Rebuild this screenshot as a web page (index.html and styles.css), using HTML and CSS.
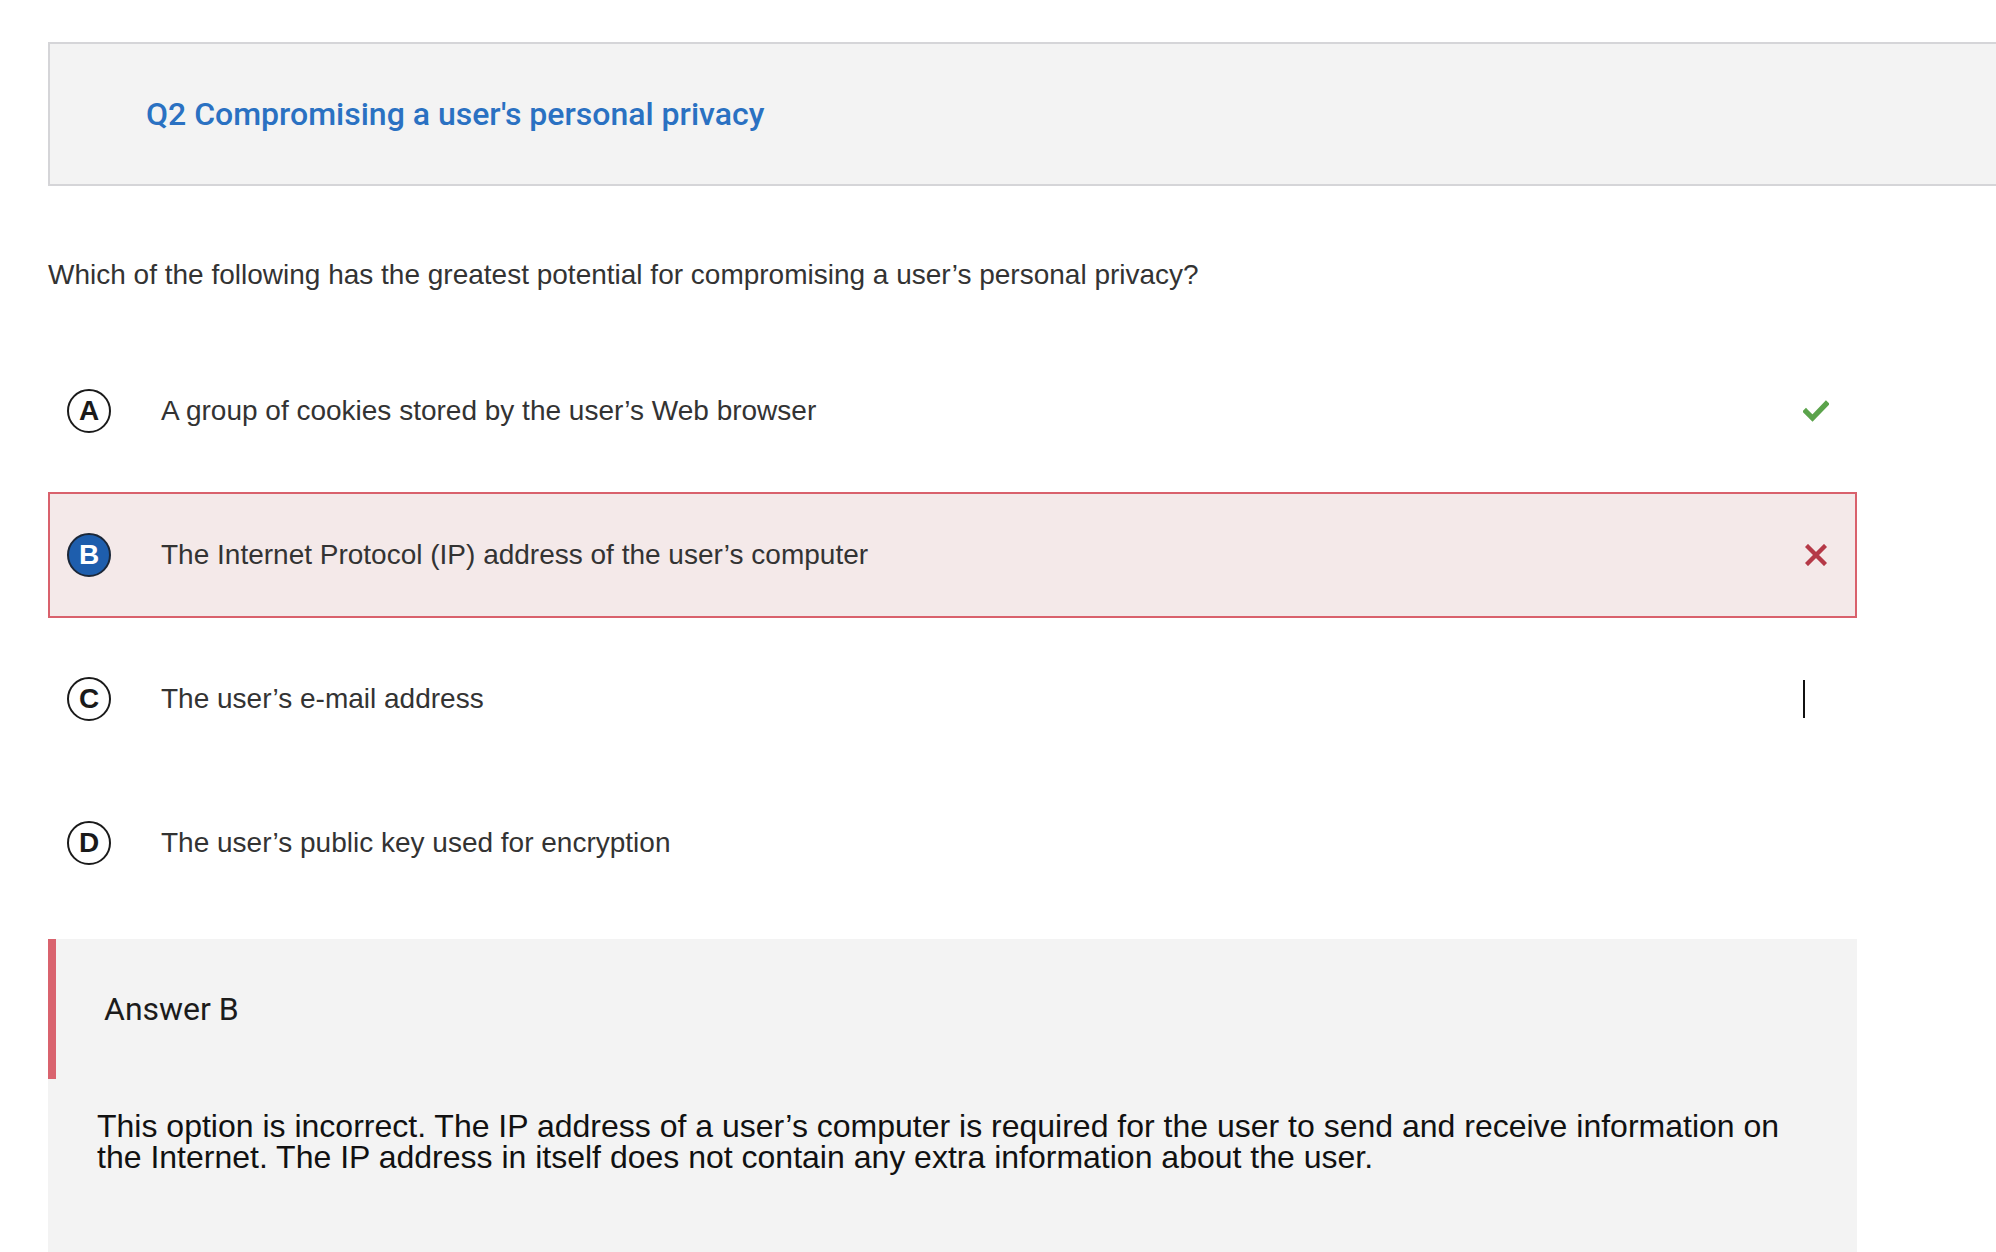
FILE: index.html
```html
<!DOCTYPE html>
<html lang="en">
<head>
<meta charset="utf-8">
<title>Q2 Compromising a user's personal privacy</title>
<link rel="stylesheet" href="styles.css">
</head>
<body>
<main class="page">
  <header class="q-head">
    <h1 class="q-title">Q2 Compromising a user's personal privacy</h1>
  </header>

  <p class="q-text">Which of the following has the greatest potential for compromising a user’s personal privacy?</p>

  <ul class="options">
    <li class="option">
      <span class="badge">A</span>
      <span class="opt-text">A group of cookies stored by the user’s Web browser</span>
      <span class="mark">
        <svg class="icon-check" width="26" height="22" viewBox="0 0 26 22"><path d="M3 11.5 L9.5 18 L23 4" fill="none" stroke="#5ba34b" stroke-width="5.2" stroke-linecap="square"/></svg>
      </span>
    </li>
    <li class="option option-wrong">
      <span class="badge badge-selected">B</span>
      <span class="opt-text">The Internet Protocol (IP) address of the user’s computer</span>
      <span class="mark">
        <svg class="icon-x" width="22" height="22" viewBox="0 0 22 22"><path d="M3 3 L19 19 M19 3 L3 19" fill="none" stroke="#b53947" stroke-width="4.4" stroke-linecap="square"/></svg>
      </span>
    </li>
    <li class="option">
      <span class="badge">C</span>
      <span class="opt-text">The user’s e-mail address</span>
      <span class="mark"><span class="caret"></span></span>
    </li>
    <li class="option">
      <span class="badge">D</span>
      <span class="opt-text">The user’s public key used for encryption</span>
      <span class="mark"></span>
    </li>
  </ul>

  <section class="answer">
    <div class="answer-head">Answer B</div>
    <p class="answer-body">This option is incorrect. The IP address of a user’s computer is required for the user to send and receive information on the Internet. The IP address in itself does not contain any extra information about the user.</p>
  </section>
</main>
</body>
</html>
```

FILE: styles.css
```css
html, body {
  margin: 0;
  padding: 0;
  background: #ffffff;
}

body {
  font-family: "Liberation Sans", Arial, sans-serif;
  color: #333333;
  overflow: hidden;
}

.page {
  padding: 42px 0 0 48px;
}

.q-head {
  height: 140px;
  background: #f3f3f3;
  border: 2px solid #d5d5d8;
  border-right: none;
  display: flex;
  align-items: center;
  padding-left: 96px;
}

.q-title {
  margin: 0;
  font-family: Roboto, "Liberation Sans", sans-serif;
  font-weight: 500;
  font-size: 32px;
  color: #2a71c2;
}

.q-text {
  margin: 72px 0 0 0;
  font-size: 28px;
  line-height: 34px;
  color: #333333;
}

.options {
  list-style: none;
  margin: 56px 0 0 0;
  padding: 0;
  width: 1809px;
  display: flex;
  flex-direction: column;
  gap: 18px;
}

.option {
  height: 126px;
  box-sizing: border-box;
  display: flex;
  align-items: center;
  padding: 0 0 0 17px;
  border: 2px solid transparent;
}

.option-wrong {
  background: #f4e9e9;
  border-color: #d9616c;
}

.badge {
  width: 40px;
  height: 40px;
  border: 2px solid #1a1a1a;
  border-radius: 50%;
  display: flex;
  align-items: center;
  justify-content: center;
  font-weight: 700;
  font-size: 28px;
  color: #1a1a1a;
  flex: none;
}

.badge-selected {
  background: #1e5ead;
  border-color: #1b2738;
  color: #ffffff;
}

.opt-text {
  margin-left: 50px;
  font-size: 28px;
  color: #333333;
  flex: 1;
}

.mark {
  width: 26px;
  margin-right: 26px;
  display: flex;
  align-items: center;
  justify-content: center;
}

.caret {
  display: block;
  width: 2px;
  height: 38px;
  background: #111111;
  margin-left: -24px;
}

.answer {
  margin-top: 33px;
  width: 1809px;
  background: #f3f3f3;
  min-height: 320px;
}

.answer-head {
  height: 140px;
  border-left: 8px solid #d9636e;
  display: flex;
  align-items: center;
  padding-left: 48px;
  font-family: Roboto, "Liberation Sans", sans-serif;
  font-size: 32px;
  color: #1c1c1c;
}

.answer-body {
  margin: 0;
  padding: 32px 60px 0 49px;
  font-size: 32px;
  line-height: 31px;
  color: #111111;
}
```
